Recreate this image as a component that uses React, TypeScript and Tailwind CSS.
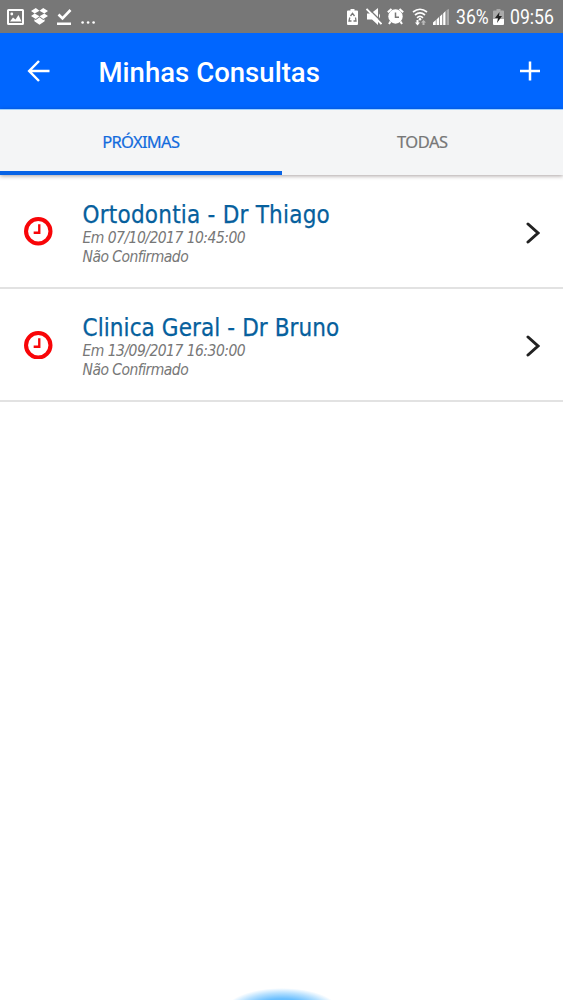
import React from "react";

const appointments = [
  { title: "Ortodontia - Dr Thiago", date: "Em 07/10/2017 10:45:00", status: "Não Confirmado", titleClass: "tracking-[0.22px]" },
  { title: "Clinica Geral - Dr Bruno", date: "Em 13/09/2017 16:30:00", status: "Não Confirmado", titleClass: "tracking-[0.080px]" },
];

function StatusBar() {
  return (
    <div className="flex h-[33px] items-center justify-between bg-[#777777] pl-[7px] pr-[9px] font-[Roboto,sans-serif] text-white">
      <div className="flex items-center">
        <svg className="h-4 w-[17px]" viewBox="0 0 17 16">
          <path fillRule="evenodd" fill="#fff" d="M1.500 0h14q1.500 0 1.500 1.500v13q0 1.500-1.500 1.500h-14Q0 16 0 14.500v-13Q0 0 1.500 0zM2 2v12h13V2zM3 12.500l3-4 2.500 2 3-4.500 3 6.500z" />
          <circle cx="4.800" cy="5" r="1.400" fill="#fff" />
        </svg>
        <svg className="ml-[7px] h-[17px] w-[17px]" viewBox="0 0 16 17" preserveAspectRatio="none" fill="#fff">
          <path d="M4.500 0L8 2.700 3.500 5.500 0 2.900zM11.500 0L16 2.900l-3.500 2.600L8 2.700zM0 8.100l3.500-2.600L8 8.300 4.500 11zM16 8.100l-3.500-2.600L8 8.300l3.500 2.700zM3.200 11.300l1.300.8L8 9.300l3.500 2.800 1.300-.8v1.900L8 16.700l-4.800-3.500z" />
        </svg>
        <svg className="ml-[9px] h-4 w-[15px]" viewBox="0 0 15 16" fill="none" stroke="#fff" strokeWidth="2.600">
          <path d="M1.500 5.500l4 4L13.500 1M0 14.700h14" />
        </svg>
        <svg className="ml-[9px] mt-[11px] h-[3px] w-4" viewBox="0 0 16 3" fill="#fff">
          <circle cx="1.600" cy="1.500" r="1.300" /><circle cx="7.100" cy="1.500" r="1.300" /><circle cx="12.600" cy="1.500" r="1.300" />
        </svg>
      </div>
      <div className="flex items-center">
        <svg className="h-4 w-[11px]" viewBox="0 0 11 16">
          <path fill="#fff" d="M3.500 0h4v1.500H10q1 0 1 1V15q0 1-1 1H1q-1 0-1-1V2.500q0-1 1-1h2.500z" />
          <path fill="none" stroke="#777" strokeWidth="1.300" d="M3.500 7l2-2.700 2 2.700M8.500 8.500L9 12H6.500M4.500 12H2l.8-3.500" />
        </svg>
        <svg className="ml-2 h-[17px] w-4" viewBox="0 0 16 17">
          <path fill="#fff" d="M1 5.500h4L12 0v17l-6-5.500H1zM13 5.500q2 2.500 0 5z" />
          <path stroke="#777" strokeWidth="1.500" d="M1.800 0L16 14" />
          <path stroke="#fff" strokeWidth="1.900" d="M.5 1L15.500 16" />
        </svg>
        <svg className="ml-[5px] h-[17px] w-[17px]" viewBox="0 0 17 17" fill="none">
          <circle cx="8.500" cy="8.500" r="7.200" fill="#fff" />
          <path stroke="#fff" strokeWidth="2" d="M.8 4.300L4.500 1M12.500 1l3.700 3.300M3.500 13.500L2 16M13.500 13.500L15 16" />
          <path stroke="#777" strokeWidth="1.500" d="M8.500 4.500v4.700H12" />
        </svg>
        <svg className="ml-[8px] h-[18px] w-4" viewBox="0 0 16 18" fill="none">
          <path stroke="#fff" strokeWidth="1.700" d="M1 4q7-5.500 14 0M3 7q5-4.200 10 0M5 9.800q3-2.700 6 0" />
          <circle cx="8" cy="11.300" r="1.300" fill="#fff" />
          <path fill="#fff" d="M4.500 12h2v2.500H8L5.500 17.500 3 14.500h1.500z" />
          <path fill="#bbb" d="M10.500 17v-2.500H9L11.500 12l2.500 2.500h-1.500V17z" />
        </svg>
        <svg className="ml-[5px] h-4 w-4" viewBox="0 0 16 16" fill="#fff">
          <path d="M0 13.500L2.800 11v5H0zM3.500 10.500L6 8v8H3.500zM6.800 7.500L9.300 5v11H6.800zM10.200 4.500L12.500 2v14h-2.300z" />
          <path fill="#aaa" d="M13.500 1L16 0v16h-2.500z" />
        </svg>
        <span className="ml-[7px] w-[33px] origin-left scale-x-[.88] whitespace-nowrap pt-px text-[20px] leading-none">36%</span>
        <svg className="ml-[4px] h-4 w-[11px]" viewBox="0 0 11 16">
          <path fill="#aaa" d="M3.500 0h4v1.500H10q1 0 1 1V10H0V2.500q0-1 1-1h2.500z" />
          <path fill="#fff" d="M0 10h11v5q0 1-1 1H1q-1 0-1-1z" />
          <path fill="#222" d="M6.500 3L2 9h3l-1 5 5-7H6z" />
        </svg>
        <span className="ml-[6px] w-[44px] origin-left scale-x-[.88] whitespace-nowrap pt-px text-[20px] leading-none">09:56</span>
      </div>
    </div>
  );
}

export default function App() {
  return (
    <div className="flex h-[1000px] w-[563px] flex-col overflow-hidden bg-white">
      <StatusBar />
      <header className="flex h-[76px] items-center bg-[#0066ff] pl-[27px] pr-[23px] text-white">
        <svg className="h-[22px] w-[23px]" viewBox="0 0 23 22" fill="none" stroke="#fff" strokeWidth="2.500">
          <path d="M12 1L2.200 11l9.800 10M2 11h20.500" />
        </svg>
        <h1 className="ml-[48.500px] pt-[4px] font-[Roboto,sans-serif] text-[27.500px] font-medium leading-8 tracking-[0.03px]">Minhas Consultas</h1>
        <svg className="ml-auto h-5 w-5" viewBox="0 0 20 20" stroke="#fff" strokeWidth="2.500">
          <path d="M10 .5v19M0 10h20" />
        </svg>
      </header>
      <nav className="grid h-[66px] shrink-0 grid-cols-2 border-t border-[#9bcfff] bg-[#f4f5f6] font-['Noto_Sans',sans-serif] text-[16.500px] shadow-[0_1px_4px_rgba(40,20,20,0.4)]">
        <button className="border-b-4 border-[#0964e6] pt-1 tracking-[-0.68px] text-[#126bdd] [-webkit-text-stroke:0.2px_#126bdd]">PRÓXIMAS</button>
        <button className="pb-0 tracking-[-0.5px] text-[#777777] [-webkit-text-stroke:0.2px_#777777]">TODAS</button>
      </nav>
      <main>
        {appointments.map((item) => (
          <article key={item.title} className="flex h-[113.500px] items-center border-b-2 border-[#e2e2e2] pl-6 pr-[23px] font-['DejaVu_Sans_Condensed','DejaVu_Sans',sans-serif]">
            <svg className="mt-px h-[28.500px] w-[28.500px]" viewBox="0 0 28 28" fill="none" stroke="#f80508">
              <circle cx="14" cy="14" r="12" strokeWidth="4" />
              <path strokeWidth="2.300" d="M15 7v8.500H9.500" />
            </svg>
            <div className="ml-[30px] pt-[7px]">
              <h2 className={`h-[27px] whitespace-nowrap text-[24px] leading-[27px] text-[#06609d] [-webkit-text-stroke:0.25px_#06609d] ${item.titleClass}`}>{item.title}</h2>
              <p className="h-[19px] whitespace-nowrap text-[15.500px] italic leading-[19px] tracking-[-0.530px] text-[#777777]">{item.date}</p>
              <p className="h-[19px] whitespace-nowrap text-[15.500px] italic leading-[19px] tracking-[-0.530px] text-[#777777]">{item.status}</p>
            </div>
            <svg className="ml-auto mt-[4px] h-[22px] w-[14px]" viewBox="0 0 14 22" fill="none" stroke="#222" strokeWidth="3" strokeLinecap="round">
              <path d="M2 2L12 11l-10 9" />
            </svg>
          </article>
        ))}
      </main>
      <footer className="mt-auto flex h-3 w-full shrink-0 justify-center">
        <div className="h-12 w-[116px] shrink-0 rounded-[50%] bg-[radial-gradient(closest-side,#38a8ff_0%,#6abfff_55%,#b8e1ff_80%,#ffffff_100%)]" />
      </footer>
    </div>
  );
}
